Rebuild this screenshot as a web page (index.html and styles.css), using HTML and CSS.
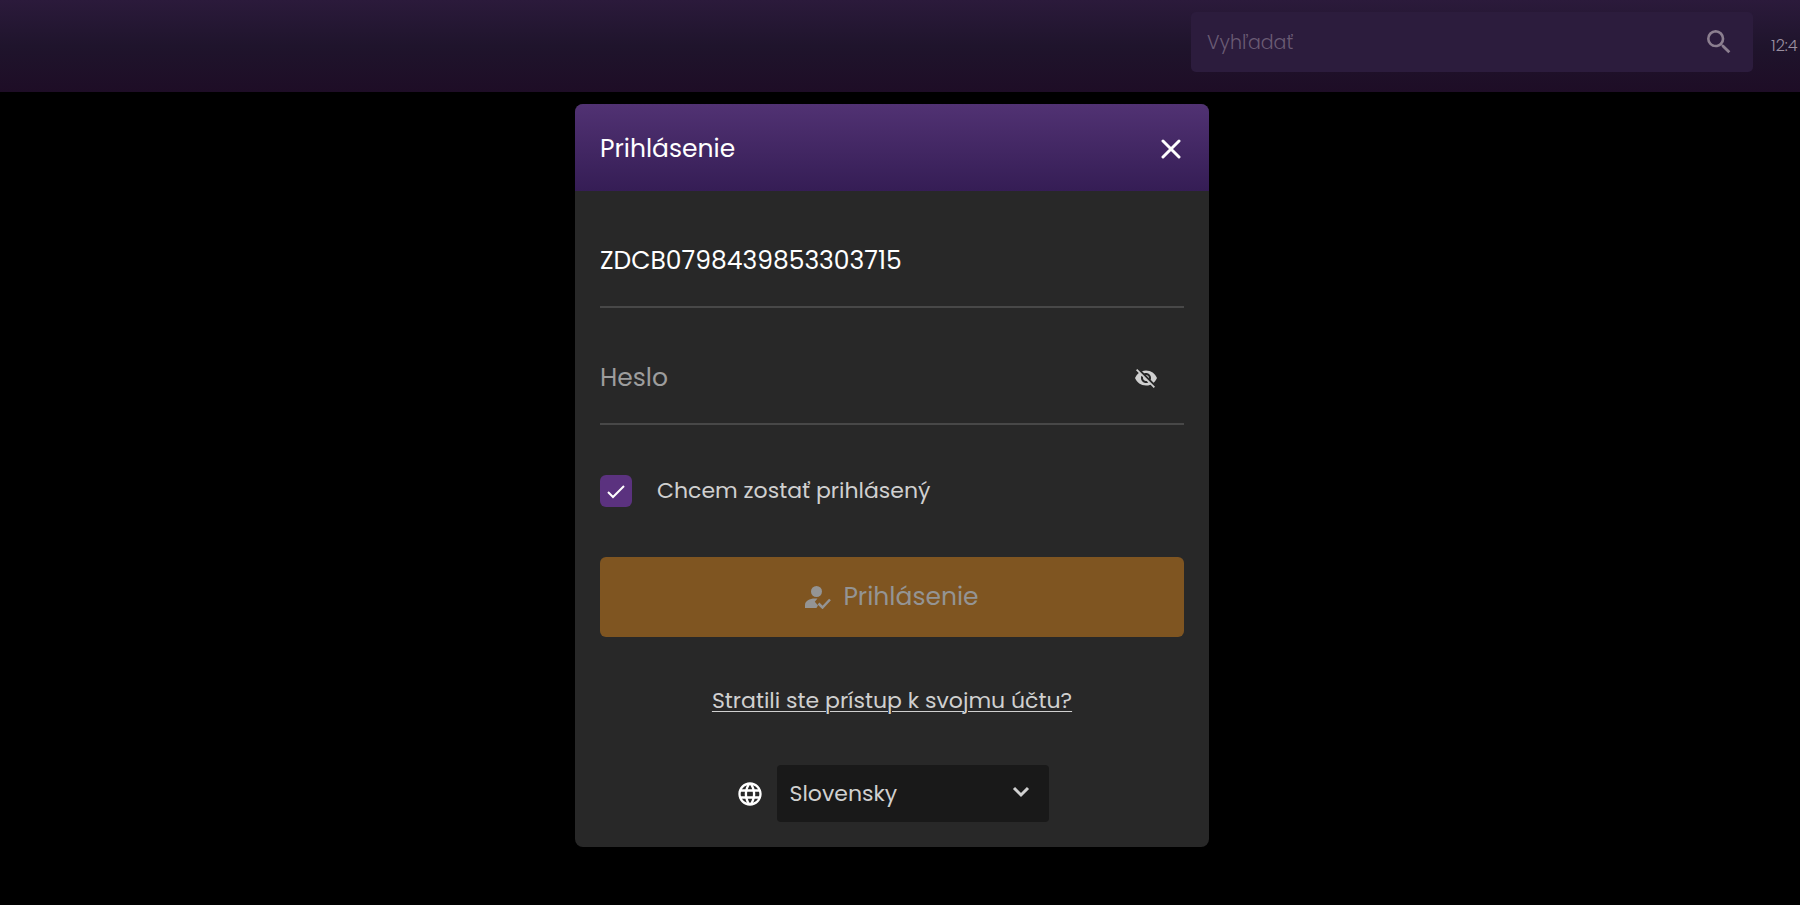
FILE: index.html
```html
<!DOCTYPE html>
<html lang="sk">
<head>
    <meta charset="UTF-8">
    <meta name="viewport" content="width=device-width, initial-scale=1.0">
    <title>Prihlásenie</title>
    <link rel="stylesheet" href="styles.css">
</head>
<body>

    <header class="navbar">
        <form class="search" role="search">
            <input type="search" placeholder="Vyhľadať" aria-label="Vyhľadať">
            <button type="submit" aria-label="Vyhľadať">
                <svg width="32" height="32" viewBox="0 0 24 24" fill="currentColor"><path d="M15.5 14h-.79l-.28-.27A6.47 6.47 0 0 0 16 9.5 6.5 6.5 0 1 0 9.5 16c1.61 0 3.09-.59 4.23-1.57l.27.28v.79l5 4.99L20.49 19l-4.99-5zm-6 0C7.01 14 5 11.99 5 9.5S7.01 5 9.5 5 14 7.01 14 9.5 11.99 14 9.5 14z"/></svg>
            </button>
        </form>
        <div class="clock">12:4</div>
    </header>

    <main class="overlay">
        <div class="modal" role="dialog" aria-labelledby="modalTitle">
            <div class="modal-header">
                <h1 id="modalTitle">Prihlásenie</h1>
                <button class="close" aria-label="Zavrieť">
                    <svg width="20" height="20" viewBox="0 0 20 20" fill="none" stroke="currentColor" stroke-width="3" stroke-linecap="round"><path d="M2 2l16 16M18 2L2 18"/></svg>
                </button>
            </div>

            <form class="modal-body">
                <div class="field">
                    <input type="text" value="ZDCB0798439853303715" aria-label="Prihlasovacie meno">
                </div>
                <div class="field">
                    <input type="password" placeholder="Heslo" aria-label="Heslo">
                    <button type="button" class="eye" aria-label="Zobraziť heslo">
                        <svg width="24" height="24" viewBox="0 0 24 24" fill="currentColor"><path d="M12 7c2.76 0 5 2.24 5 5 0 .65-.13 1.26-.36 1.83l2.92 2.92c1.51-1.26 2.7-2.89 3.43-4.75-1.73-4.39-6-7.5-11-7.5-1.4 0-2.74.25-3.98.7l2.16 2.16C10.74 7.13 11.35 7 12 7zM2 4.27l2.28 2.28.46.46A11.8 11.8 0 0 0 1 12c1.73 4.39 6 7.5 11 7.5 1.55 0 3.03-.3 4.38-.84l.42.42L19.73 22 21 20.73 3.27 3 2 4.27zM7.53 9.8l1.55 1.55c-.05.21-.08.43-.08.65 0 1.66 1.34 3 3 3 .22 0 .44-.03.65-.08l1.55 1.55c-.67.33-1.41.53-2.2.53-2.76 0-5-2.24-5-5 0-.79.2-1.53.53-2.2zm4.31-.78l3.15 3.15.02-.16c0-1.66-1.34-3-3-3l-.17.01z"/></svg>
                    </button>
                </div>

                <label class="remember">
                    <input type="checkbox" checked>
                    Chcem zostať prihlásený
                </label>

                <button type="submit" class="submit">
                    <svg width="26" height="24" viewBox="0 0 26 24" fill="currentColor"><circle cx="11.5" cy="6.5" r="5.5"/><path d="M0 23v-3c0-4 4.5-6.5 10-6.5l2.5.1-2.7 3.2 3.2 3.7-1.6 2.5z"/><path d="M13.500 18.5l4 4 7.500-8" fill="none" stroke="currentColor" stroke-width="2.5"/></svg>
                    Prihlásenie
                </button>

                <a href="#" class="lost">Stratili ste prístup k svojmu účtu?</a>

                <div class="language">
                    <svg width="28" height="28" viewBox="0 0 24 24" fill="currentColor"><path d="M11.99 2C6.47 2 2 6.48 2 12s4.47 10 9.99 10C17.52 22 22 17.52 22 12S17.52 2 11.99 2zm6.93 6h-2.95a15.65 15.65 0 0 0-1.38-3.56A8.03 8.03 0 0 1 18.92 8zM12 4.04c.83 1.2 1.48 2.53 1.91 3.96h-3.82c.43-1.43 1.08-2.76 1.91-3.96zM4.26 14C4.1 13.36 4 12.69 4 12s.1-1.36.26-2h3.38c-.08.66-.14 1.32-.14 2s.06 1.34.14 2H4.26zm.82 2h2.95c.32 1.25.78 2.45 1.38 3.56A7.99 7.99 0 0 1 5.08 16zm2.95-8H5.08a7.99 7.99 0 0 1 4.33-3.56A15.65 15.65 0 0 0 8.03 8zM12 19.96c-.83-1.2-1.48-2.53-1.91-3.96h3.82c-.43 1.43-1.08 2.76-1.91 3.96zM14.34 14H9.66c-.09-.66-.16-1.32-.16-2s.07-1.35.16-2h4.68c.09.65.16 1.32.16 2s-.07 1.34-.16 2zm.25 5.56c.6-1.11 1.06-2.31 1.38-3.56h2.95a8.03 8.03 0 0 1-4.33 3.56zM16.36 14c.08-.66.14-1.32.14-2s-.06-1.34-.14-2h3.38c.16.64.26 1.31.26 2s-.1 1.36-.26 2h-3.38z"/></svg>
                    <div class="select">
                        <select aria-label="Jazyk">
                            <option>Slovensky</option>
                            <option>Česky</option>
                            <option>English</option>
                        </select>
                        <svg class="arrow" width="18" height="12" viewBox="0 0 18 12" fill="none" stroke="currentColor" stroke-width="3"><path d="M2 2l7 7 7-7"/></svg>
                    </div>
                </div>
            </form>
        </div>
    </main>

</body>
</html>
```
FILE: styles.css
```css
* {
    box-sizing: border-box;
}
body {
    margin: 0;
    min-height: 100vh;
    background-color: #000;
    font-family: Poppins, Inter, sans-serif;
    color: #d0d0d0;
    overflow-x: hidden;
}
input, button, select {
    font: inherit;
    color: inherit;
    border: none;
    background: none;
    padding: 0;
    outline: none;
}
button {
    cursor: pointer;
}
svg {
    display: block;
    flex: none;
}

/* Horná lišta */
.navbar {
    display: flex;
    justify-content: flex-end;
    gap: 18px;
    height: 92px;
    padding-top: 12px;
    background: linear-gradient(#2b1a3b, #1f142c 50%, #1e0d26);
}
.search {
    display: flex;
    align-items: center;
    width: 562px;
    height: 60px;
    padding: 0 18px 0 16px;
    border-radius: 5px;
    background-color: #2c1c3d;
    color: #8c7f90;
}
.search input {
    flex: 1;
    min-width: 0;
    font-size: 19px;
    font-weight: 300;
}
.search input::placeholder {
    color: #6a5b74;
    opacity: 1;
}
.clock {
    width: 29px;
    font-size: 16px;
    font-weight: 300;
    line-height: 20px;
    padding-top: 24px;
    color: #9a8fa0;
    white-space: nowrap;
}

/* Prihlasovacie okno */
.overlay {
    display: flex;
    justify-content: center;
    padding: 12px 16px 57px 0;
}
.modal {
    width: 634px;
    border-radius: 8px;
    background-color: #282828;
    overflow: hidden;
}
.modal-header {
    display: flex;
    justify-content: space-between;
    align-items: center;
    height: 87px;
    padding: 2px 28px 0 25px;
    background: linear-gradient(#513273, #351d55);
    color: #fff;
}
.modal-header h1 {
    margin: 0;
    font-size: 25px;
    font-weight: 400;
}
.modal-body {
    display: flex;
    flex-direction: column;
    padding: 25px;
}
.field {
    display: flex;
    align-items: center;
    height: 92px;
    margin-bottom: 25px;
    border-bottom: 2px solid #484848;
}
.field input {
    flex: 1;
    min-width: 0;
    height: 88px;
    font-size: 25px;
    color: #fff;
}
.field input::placeholder {
    color: #9d9d9d;
    opacity: 1;
}
.eye {
    padding: 0 26px;
}
.remember {
    display: flex;
    align-items: center;
    gap: 25px;
    margin: 25px 0 50px;
    font-size: 22px;
    line-height: 32px;
}
.remember input {
    appearance: none;
    width: 32px;
    height: 32px;
    margin: 0;
    border-radius: 6px;
}
.remember input:checked {
    background: #5b327f url("data:image/svg+xml,%3Csvg xmlns='http://www.w3.org/2000/svg' viewBox='0 0 32 32' fill='none' stroke='white' stroke-width='2'%3E%3Cpath d='M8 17l5 5L24 11'/%3E%3C/svg%3E") center no-repeat;
}
.submit {
    display: flex;
    justify-content: center;
    align-items: center;
    gap: 12px;
    height: 80px;
    border-radius: 6px;
    background-color: #7f5521;
    color: #949494;
    font-size: 25px;
}
.lost {
    align-self: center;
    margin: 48px 0;
    color: #d0d0d0;
    font-size: 22px;
    line-height: 32px;
    text-decoration-thickness: 1px;
    text-underline-offset: 3px;
}
.language {
    display: flex;
    justify-content: center;
    align-items: center;
    gap: 13px;
    color: #fff;
}
.select {
    position: relative;
    color: #d0d0d0;
}
.select select {
    appearance: none;
    width: 272px;
    height: 57px;
    padding-left: 13px;
    border-radius: 4px;
    background-color: #191919;
    font-size: 22px;
}
.arrow {
    position: absolute;
    top: 21px;
    right: 19px;
    pointer-events: none;
}
```
